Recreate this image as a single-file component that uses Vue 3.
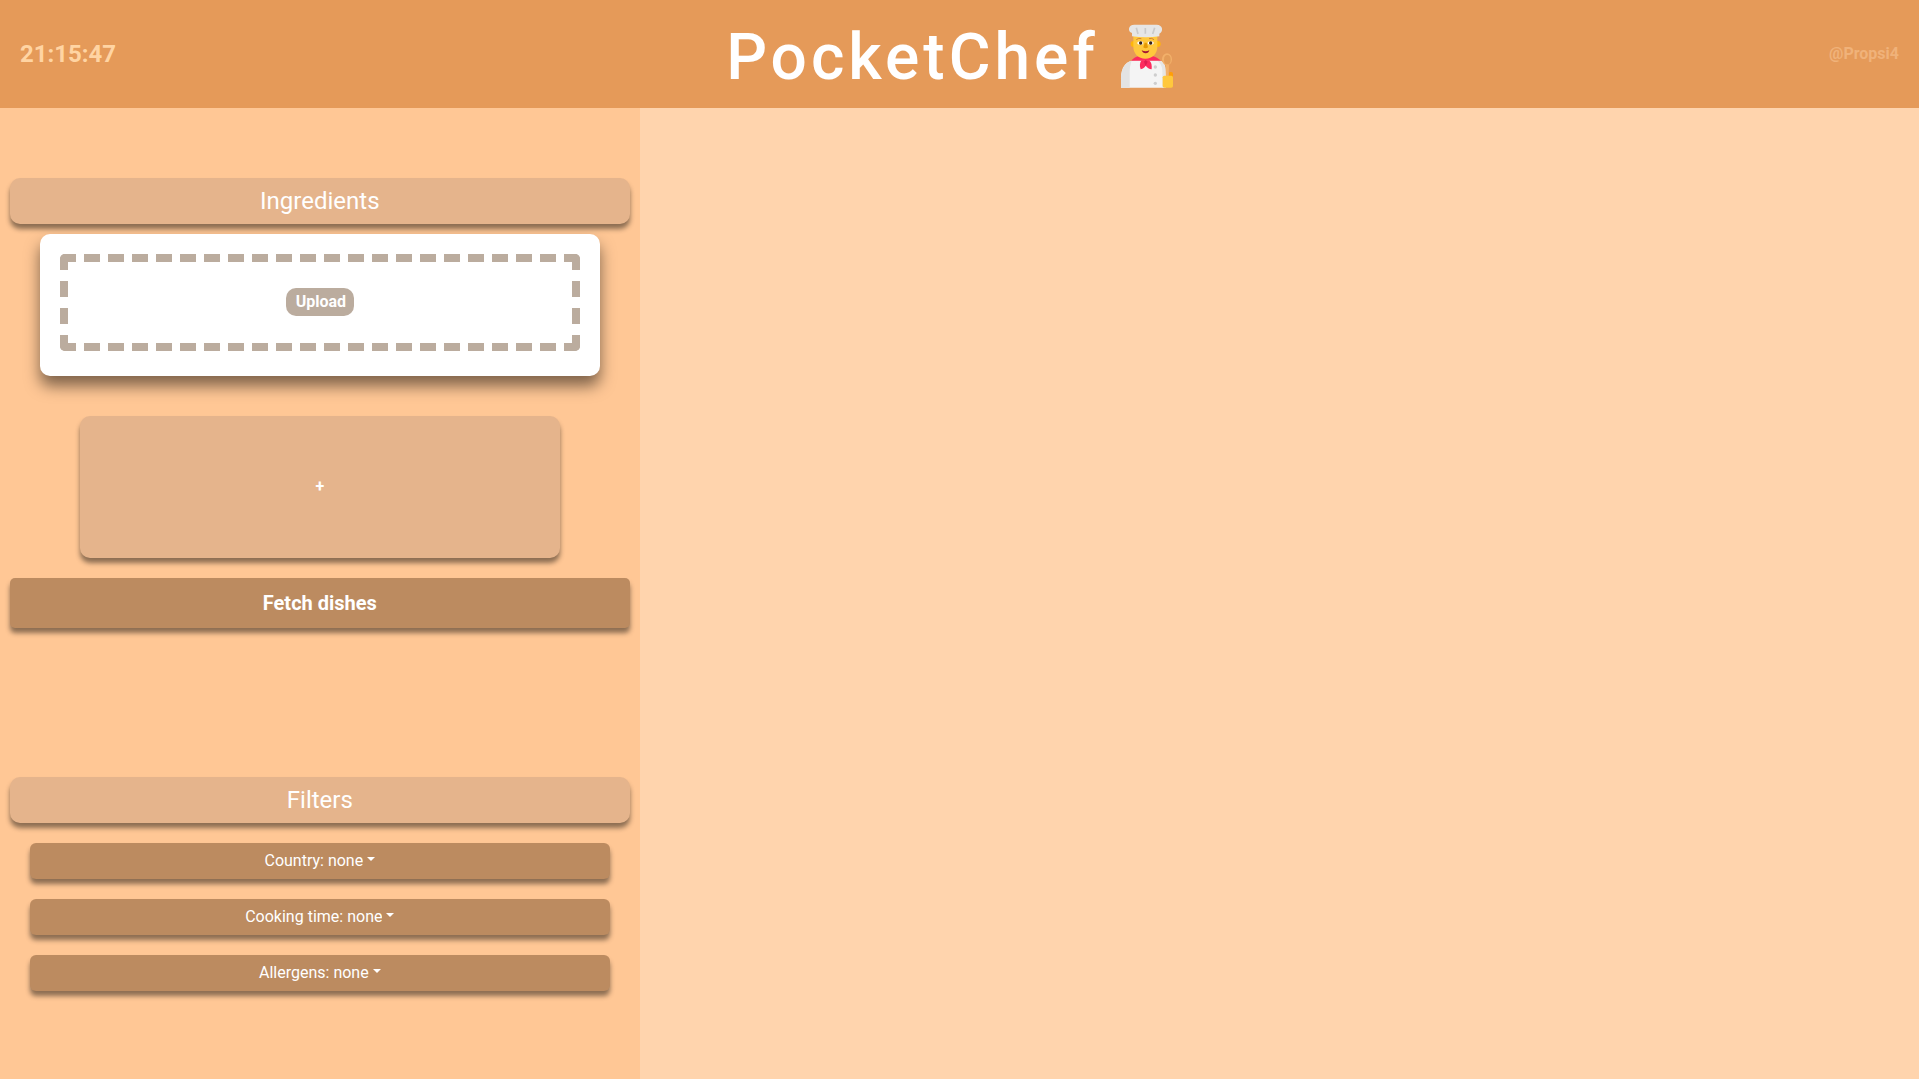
<script setup>
import { ref } from 'vue'

const time = ref('21:15:47')
const filters = [
  { id: 'country', label: 'Country:' },
  { id: 'cooking-time', label: 'Cooking time:' },
  { id: 'allergens', label: 'Allergens:' },
]
</script>

<template>
  <div class="app">
    <header class="header">
      <time class="clock">{{ time }}</time>
      <h1 class="brand">
        <span class="brand-name">PocketChef</span>
        <svg class="chef" viewBox="42 43 216 192" aria-hidden="true">
          <path d="M60 234v-28c0-36 18-54 42-54h66c20 0 26 14 26 34v48z" fill="#f4f4f4" />
          <path d="M60 234v-28c0-32 14-48 32-53-4 10-6 22-6 36v45z" fill="#e3e3e3" />
          <path d="M168 152c18 1 26 13 26 34v48h-10v-50c0-14-6-24-16-32z" fill="#e6e6e6" />
          <path d="M90 153c6-6 14-12 24-14h40c10 2 18 8 26 14z" fill="#fd2b5e" />
          <path d="M122 152h22c8 6 9 16 8 27-7-1-14-5-18-11-3 5-8 9-15 11-4-9-3-21 3-27z" fill="#fd2b5e" />
          <path d="M134 151l-5 5 5 13 6-13z" fill="#df1d51" />
          <circle cx="98" cy="103" r="9" fill="#ffb60a" />
          <circle cx="170" cy="103" r="9" fill="#ffb60a" />
          <path d="M97 79h72v32c0 21-15 36-36 36s-36-15-36-36z" fill="#ffc83d" />
          <path d="M106 90q7-6 15-3M144 87q9-3 15 3" fill="none" stroke="#d28036" stroke-width="3" />
          <ellipse cx="118" cy="100" rx="9" ry="5" fill="#fff" />
          <ellipse cx="149" cy="100" rx="9" ry="5" fill="#fff" />
          <circle cx="119" cy="100" r="5" fill="#382116" />
          <circle cx="149" cy="100" r="5" fill="#382116" />
          <path d="M131 99h6l4 14q-7 6-14 0z" fill="#e59a05" />
          <path d="M122 122q12 6 23 0-2 9-11 9t-12-9z" fill="#a31635" />
          <path d="M93 80V70c-14-4-12-25 7-25h67c19 0 21 21 8 27v8q-41 6-82 0z" fill="#e6e6e6" />
          <path d="M106 54l5 19M133 55v17M161 54l-6 19" fill="none" stroke="#cacaca" stroke-width="5" />
          <circle cx="163" cy="172" r="5" fill="#cecece" />
          <circle cx="163" cy="196" r="5" fill="#cecece" />
          <circle cx="163" cy="221" r="5" fill="#cecece" />
          <rect x="203" y="187" width="13" height="18" rx="5" fill="#ff9e08" />
          <path d="M194 165h10l-1 36h-8z" fill="#f2b06a" />
          <ellipse cx="198" cy="149" rx="15" ry="18" fill="#f2b06a" />
          <ellipse cx="199" cy="150" rx="10" ry="14" fill="#e39c58" />
          <rect x="185" y="198" width="31" height="36" rx="5" fill="#ffc83d" />
        </svg>
      </h1>
      <a class="author" href="#">@Propsi4</a>
    </header>

    <div class="content">
      <aside class="sidebar">
        <section class="ingredients">
          <h2 class="section-title">Ingredients</h2>
          <div class="upload-card">
            <div class="drop-zone">
              <button type="button" class="upload">Upload</button>
            </div>
          </div>
          <button type="button" class="add">+</button>
          <button type="button" class="fetch">Fetch dishes</button>
        </section>

        <section class="filters">
          <h2 class="section-title">Filters</h2>
          <div v-for="f in filters" :key="f.id" class="filter">
            <label :for="f.id">{{ f.label }}</label>
            <select :id="f.id">
              <option>none</option>
            </select>
            <span class="caret"></span>
          </div>
        </section>
      </aside>
      <main class="dishes"></main>
    </div>
  </div>
</template>

<style>
body {
  margin: 0;
}
</style>

<style scoped>
.app {
  display: flex;
  flex-direction: column;
  min-height: 100vh;
  font-family: Roboto, sans-serif;
  font-size: 16px;
  line-height: 24px;
  color: #fff;
}
.app *,
.app {
  box-sizing: border-box;
}
button,
select {
  font: inherit;
  color: inherit;
  border: 0;
  margin: 0;
  padding: 0;
  cursor: pointer;
}
.header {
  display: grid;
  grid-template-columns: 1fr auto 1fr;
  align-items: center;
  height: 10vh;
  padding: 0 20px;
  background: #e59a59;
}
.clock {
  font-size: 24px;
  font-weight: 700;
  color: #ffd4a3;
}
.brand {
  display: flex;
  align-items: center;
  gap: 16px;
  margin: 0;
  padding: 4px 6px 0 0;
  font-size: 64px;
  line-height: 76px;
  font-weight: 500;
  letter-spacing: 4px;
}
.brand-name {
  padding-top: 4px;
}
.chef {
  width: 72px;
  height: 64px;
}
.author {
  justify-self: end;
  font-weight: 700;
  color: #f0b27a;
  text-decoration: none;
}
.content {
  display: flex;
  flex: 1;
}
.sidebar {
  display: flex;
  flex-direction: column;
  width: 33.3333%;
  background: #ffc795;
}
.ingredients,
.filters {
  display: flex;
  flex-direction: column;
  justify-content: center;
  padding: 0 10px;
}
.ingredients {
  flex: 3 0 0;
  padding-top: 6px;
}
.filters {
  flex: 2 0 0;
  padding-bottom: 2px;
}
.section-title,
.add,
.fetch,
.filter {
  box-shadow: 0 5px 5px rgba(0, 0, 0, 0.45);
}
.section-title {
  margin: 0;
  padding: 8px;
  border-radius: 10px;
  background: #e5b48c;
  font-size: 24px;
  line-height: 30px;
  font-weight: 400;
  text-align: center;
}
.upload-card {
  margin: 10px 30px 40px;
  padding: 20px 20px 25px;
  border-radius: 10px;
  background: #fff;
  box-shadow: 0 10px 15px rgba(0, 0, 0, 0.5);
}
.drop-zone {
  display: flex;
  align-items: center;
  justify-content: center;
  height: 97px;
  border: 8px dashed #bbac9e;
  border-radius: 5px;
}
.upload {
  height: 28px;
  padding: 0 8px 0 10px;
  border-radius: 10px;
  background: #bbac9e;
  font-weight: 700;
}
.add {
  height: 142px;
  margin: 0 70px 20px;
  border-radius: 10px;
  background: #e5b48c;
  font-weight: 700;
}
.fetch {
  height: 50px;
  border-radius: 5px;
  background: #bc8b60;
  font-size: 20px;
  font-weight: 700;
}
.filter {
  display: flex;
  align-items: center;
  justify-content: center;
  gap: 4px;
  height: 36px;
  margin: 20px 20px 0;
  border-radius: 6px;
  background: #bc8b60;
}
.filter select {
  appearance: none;
  field-sizing: content;
  background: transparent;
}
.filter option {
  color: #fff;
  background: #bc8b60;
}
.caret {
  margin-bottom: 4px;
  border-top: 4px solid #fff;
  border-left: 4px solid transparent;
  border-right: 4px solid transparent;
}
.dishes {
  flex: 1;
  background: #ffd4ad;
}
</style>
